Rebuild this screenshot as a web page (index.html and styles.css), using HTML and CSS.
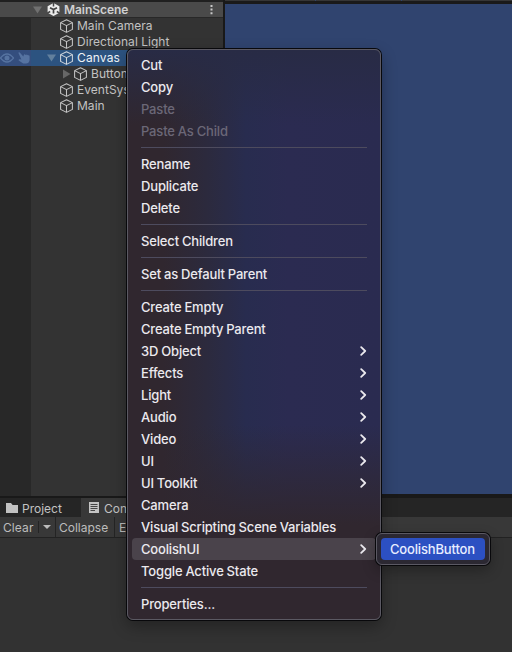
FILE: index.html
```html
<!DOCTYPE html>
<html lang="en">
<head>
<meta charset="utf-8">
<title>MainScene</title>
<link rel="stylesheet" href="styles.css">
</head>
<body>
<svg class="defs" width="0" height="0">
  <symbol id="cube" viewBox="0 0 14 14"><path d="M7 .8 12.9 3.6V10.4L7 13.4 1.1 10.4V3.6ZM1.1 3.6 7 6.6 12.9 3.6M7 6.6V13.4" fill="none" stroke="currentColor" stroke-width="1.05" stroke-linejoin="round"/></symbol>
  <symbol id="chev" viewBox="0 0 7 10"><path d="M1.2 1.2 5.2 5 1.2 8.8" fill="none" stroke="currentColor" stroke-width="1.8" stroke-linecap="round" stroke-linejoin="round"/></symbol>
</svg>
<div class="editor">
  <div class="upper">
    <section class="hierarchy">
      <header class="scene">
        <svg class="arrow" viewBox="0 0 9 8"><path d="M0 .5H9L4.5 7.5Z" fill="currentColor"/></svg>
        <svg class="unity" viewBox="0 0 13 13"><path d="M6.5 0 12.4 3.2V9.8L6.5 13 .6 9.8V3.2Z" fill="#ececec"/><path d="M6.5 6.6V10.6M6.5 6.6 3 4.7M6.5 6.6 10 4.7" stroke="#444" stroke-width="1.7"/><path d="M6.5 0V3.4M.2 10.2 3.2 8.5M12.8 10.2 9.8 8.5" fill="none" stroke="#444" stroke-width="1.5"/></svg>
        <span>MainScene</span>
        <svg class="dots" viewBox="0 0 3 11"><path d="M.5 1h2v2h-2zM.5 4.6h2v2h-2zM.5 8.2h2v2h-2z" fill="#c8c8c8"/></svg>
      </header>
      <div class="tree">
        <div class="row"><div class="gutter"></div><svg class="cube"><use href="#cube"/></svg><span>Main Camera</span></div>
        <div class="row"><div class="gutter"></div><svg class="cube"><use href="#cube"/></svg><span>Directional Light</span></div>
        <div class="row selected">
          <div class="gutter">
            <svg class="eye" viewBox="0 0 14 10"><path d="M.5 5Q7-3 13.5 5Q7 13 .5 5Z" fill="none" stroke="currentColor" stroke-width="1.3"/><circle cx="7" cy="5" r="2.5" fill="currentColor"/></svg>
            <svg class="hand" viewBox="0 0 12 12"><path d="M.3.8Q1.3-.3 2.2.9L5.3 4.5 6 2.5Q7 1.7 7.5 3Q8.5 1.9 9 3.2Q10 2.3 10.4 3.5Q11.4 3 11.6 4.4V8.3Q11 11.4 8 11.6H5.2L.7 8.6Q.3 7.2 1.6 7.2L3.4 7.6Z" fill="currentColor"/></svg>
          </div>
          <svg class="arrow" viewBox="0 0 9 8"><path d="M0 .5H9L4.5 7.5Z" fill="currentColor"/></svg>
          <svg class="cube"><use href="#cube"/></svg><span>Canvas</span>
        </div>
        <div class="row nested"><div class="gutter"></div><svg class="arrow" viewBox="0 0 9 10"><path d="M1 .5V9.5L8.5 5Z" fill="currentColor"/></svg><svg class="cube"><use href="#cube"/></svg><span>Button</span></div>
        <div class="row"><div class="gutter"></div><svg class="cube"><use href="#cube"/></svg><span>EventSys</span></div>
        <div class="row"><div class="gutter"></div><svg class="cube"><use href="#cube"/></svg><span>Main</span></div>
      </div>
    </section>
    <section class="view"><div class="strip"><i></i><i></i><i></i></div></section>
  </div>
  <section class="console">
    <div class="tabs">
      <div class="tab project"><svg class="folder" viewBox="0 0 12 10"><path d="M0 0H5L6.6 2H12V10H0Z" fill="currentColor"/></svg>Project</div>
      <div class="tab active"><svg class="page" viewBox="0 0 10 11"><path d="M0 0H10V11H0Z" fill="#c4c4c4"/><path d="M1.5 2.5H8.5M1.5 4.5H8.5M1.5 6.5H8.5M1.5 8.5H6" stroke="#383838" stroke-width=".9"/></svg>Con</div>
    </div>
    <div class="toolbar">
      <div class="tool clear">Clear</div>
      <div class="tool drop"><svg viewBox="0 0 8 4"><path d="M0 0H8L4 4Z" fill="currentColor"/></svg></div>
      <div class="tool collapse">Collapse</div>
      <div class="tool error">E</div>
    </div>
  </section>
</div>

<nav class="menu context">
  <div class="item">Cut</div>
  <div class="item">Copy</div>
  <div class="item disabled">Paste</div>
  <div class="item disabled">Paste As Child</div>
  <hr>
  <div class="item">Rename</div>
  <div class="item">Duplicate</div>
  <div class="item">Delete</div>
  <hr>
  <div class="item">Select Children</div>
  <hr>
  <div class="item">Set as Default Parent</div>
  <hr>
  <div class="item">Create Empty</div>
  <div class="item">Create Empty Parent</div>
  <div class="item">3D Object<svg><use href="#chev"/></svg></div>
  <div class="item">Effects<svg><use href="#chev"/></svg></div>
  <div class="item">Light<svg><use href="#chev"/></svg></div>
  <div class="item">Audio<svg><use href="#chev"/></svg></div>
  <div class="item">Video<svg><use href="#chev"/></svg></div>
  <div class="item">UI<svg><use href="#chev"/></svg></div>
  <div class="item">UI Toolkit<svg><use href="#chev"/></svg></div>
  <div class="item">Camera</div>
  <div class="item">Visual Scripting Scene Variables</div>
  <div class="item open">CoolishUI<svg><use href="#chev"/></svg></div>
  <div class="item">Toggle Active State</div>
  <hr>
  <div class="item">Properties...</div>
</nav>
<nav class="menu submenu"><div class="item chosen">CoolishButton</div></nav>
</body>
</html>
```
FILE: styles.css
```css
* { box-sizing: border-box; }
body {
  margin: 0;
  width: 512px;
  height: 652px;
  overflow: hidden;
  background: #191919;
  font: 12px/16px Inter, "Liberation Sans", sans-serif;
  color: #c2c2c2;
}
svg { display: block; flex: none; }
.defs { position: absolute; }
.editor { display: flex; flex-direction: column; height: 652px; }
.upper { display: flex; height: 498px; }

.hierarchy {
  display: flex;
  flex-direction: column;
  width: 223px;
  height: 496px;
  border-top: 2px solid #202020;
  background: linear-gradient(90deg, #282828 31px, #333 31px);
}
.scene {
  display: flex;
  align-items: center;
  height: 16px;
  padding: 0 10px 0 33px;
  background: #4a4a4a;
  border-bottom: 1px solid #282828;
  font-weight: 600;
  letter-spacing: -.05px;
  color: #d0d0d0;
}
.scene .arrow { color: #707070; }
.scene .unity { width: 13px; height: 13px; margin: 0 4px 0 5px; }
.dots { width: 3px; height: 11px; margin-left: auto; }
.arrow { width: 9px; height: 8px; color: #676767; }
.row { display: flex; align-items: center; height: 16px; letter-spacing: .03px; }
.gutter { display: flex; align-items: center; width: 31px; height: 16px; margin-right: 28px; }
.cube { width: 15px; height: 14px; margin-right: 3px; color: #c4c4c4; }
.selected { background: linear-gradient(90deg, #344e7e 31px, #2c5380 31px); color: #eef2f6; letter-spacing: .15px; }
.selected .gutter { margin-right: 16px; color: #5673a1; }
.selected .arrow { margin-right: 3px; color: #62809d; }
.selected .cube { color: #d0d6dc; }
.eye { width: 14px; height: 10px; }
.hand { width: 12px; height: 12px; margin-left: 4px; }
.nested .arrow { height: 10px; margin-right: 2px; }
.nested .gutter { margin-right: 31px; }

.view {
  flex: 1;
  margin: 0 0 4px 2px;
  background: #30446f;
}
.strip { display: flex; gap: 1px; height: 4px; border-bottom: 3px solid #1a1a1a; }
.strip i { width: 85px; background: #363636; }
.strip i:first-child { width: 90px; }
.strip i:last-child { flex: 1; }

.console { flex: 1; background: #323232; }
.tabs { display: flex; height: 19px; background: #252525; font-size: 12px; }
.tab { display: flex; align-items: center; height: 19px; padding-top: 2px; }
.project { width: 81px; padding-left: 6px; }
.folder { width: 12px; height: 10px; margin: -2px 4px 0 0; }
.active { width: 80px; padding-left: 8px; background: #383838; }
.page { width: 10px; height: 11px; margin: -2px 5px 0 0; }
.toolbar { display: flex; height: 21px; background: #383838; border-bottom: 1px solid #222; }
.tool { display: flex; align-items: center; height: 20px; padding-top: 1px; color: #bcbcbc; }
.clear { width: 38px; padding-left: 3px; letter-spacing: .1px; }
.drop { width: 18px; padding-left: 5px; border-right: 1px solid #242424; background: linear-gradient(#242424, #242424) 0 4px / 1px 12px no-repeat; }
.drop svg { width: 8px; height: 4px; margin-top: -2px; }
.collapse { width: 59px; padding-left: 3px; border-right: 1px solid #242424; }
.error { padding-left: 4px; }

.menu {
  position: absolute;
  border: 1px solid #5b5963;
  border-radius: 6px;
  padding: 4px;
  font-size: 13px;
  line-height: 22px;
  font-weight: 500;
  letter-spacing: -.16px;
  word-spacing: -.3px;
  color: #ebe9ee;
}
.context {
  left: 127px;
  top: 49px;
  width: 254px;
  height: 571px;
  background:
    linear-gradient(180deg, transparent 375px, #30272f80 425px, #30272f 475px),
    linear-gradient(180deg, #282b45 0, transparent 75px),
    linear-gradient(90deg, #30272f 0, #30272f 35px, #2c2a3d 78px, #282c4f 118px, #2b2b51 160px, #2a2b50 100%);
  box-shadow: 0 0 0 1px #08080b, 0 6px 16px rgba(0,0,0,.32);
}
.item { display: flex; align-items: center; height: 22px; padding: 0 9px; border-radius: 4px; white-space: nowrap; }
.item svg { width: 7px; height: 10px; margin-left: auto; }
.disabled { color: #6b6777; }
.open { background: #4a434b; }
.menu hr { height: 1px; margin: 5px 9px; border: 0; background: #4d4b5e; }
.submenu {
  left: 376px;
  top: 533px;
  width: 114px;
  height: 32px;
  background: #2b2832;
  box-shadow: 0 0 0 1px #08080b, 0 5px 14px rgba(0,0,0,.3);
}
.chosen { background: #2c50c2; color: #e8edff; }
```
